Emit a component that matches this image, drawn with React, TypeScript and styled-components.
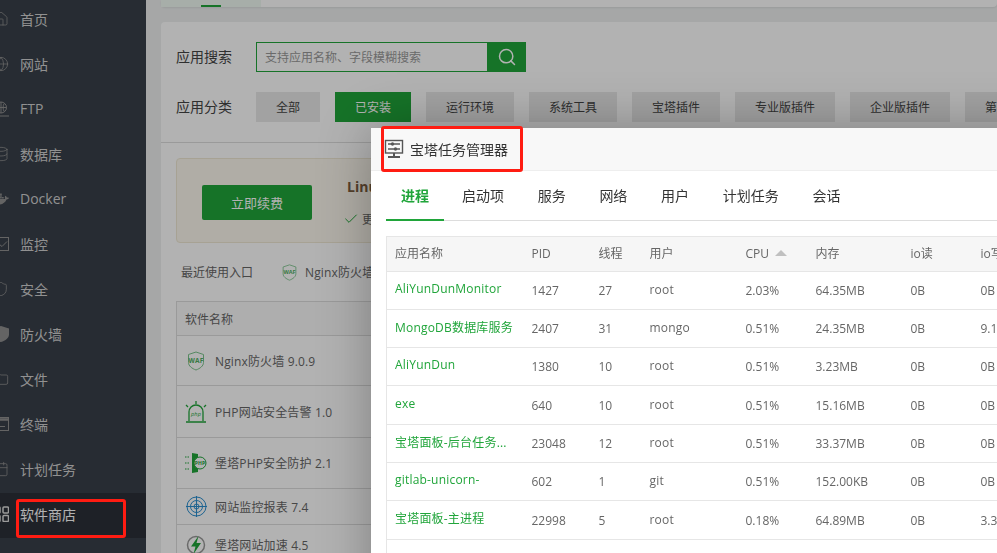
import * as React from 'react';
import styled, { createGlobalStyle } from 'styled-components';
import { Calendar, Database, Folder, Globe, Home, Search, Check, Shield } from 'lucide-react';
import { FaDocker } from 'react-icons/fa';

const font = `"Open Sans", "Noto Sans CJK SC", sans-serif`;

const GlobalStyle = createGlobalStyle`
  html, body {
    margin: 0;
    height: 100%;
    overflow: hidden;
    font-family: ${font};
  }
  * { box-sizing: border-box; }
`;

const FtpIcon = () => (
  <svg width="16" height="16" viewBox="0 0 16 16" fill="none" stroke="currentColor" strokeWidth="1">
    <circle cx="8" cy="6.5" r="5.5" />
    <path d="M2.5 6.5h11M8 1v11M4.8 2.5c1.5 2.5 1.5 5.5 0 8M11.2 2.5c-1.5 2.5-1.5 5.5 0 8M0 15h16" />
  </svg>
);

const MonitorIcon = () => (
  <svg width="16" height="16" viewBox="0 0 16 16" fill="none" stroke="currentColor" strokeWidth="1">
    <rect x="0.5" y="1.5" width="15" height="13" />
    <path d="M3 11l3-3 3 2.5 5-5" />
  </svg>
);

const HalfShieldIcon = () => (
  <svg width="16" height="16" viewBox="0 0 16 16" fill="currentColor">
    <path d="M1 2.5L8 0l8 2.5v6c0 3.500-3.500 6-8 7.500-4.500-1.500-7-4-7-7.500z" />
  </svg>
);

const TerminalIcon = () => (
  <svg width="16" height="16" viewBox="0 0 16 16" fill="none" stroke="currentColor" strokeWidth="1">
    <rect x="0.5" y="1.5" width="15" height="13" />
    <path d="M0.500 3.500h15" strokeWidth="2.500" />
    <path d="M7 10.500h5" />
  </svg>
);

const GridIcon = () => (
  <svg width="16" height="16" viewBox="0 0 16 16" fill="none" stroke="currentColor" strokeWidth="1.500">
    <rect x="1" y="1" width="6" height="6" rx="1" />
    <rect x="10" y="1" width="5.500" height="6" rx="1" />
    <rect x="1" y="9.500" width="6" height="6" rx="1" />
    <rect x="10" y="9.500" width="5.500" height="6" rx="1" />
  </svg>
);

const WafIcon = ({ size = 20 }: { size?: number }) => (
  <svg width={size} height={size} viewBox="0 0 20 20" fill="none">
    <path d="M10 1l7.500 2.500v8c0 3.500-3.500 6-7.500 7.500-4-1.500-7.500-4-7.500-7.500v-8z" stroke="#7cc48c" strokeWidth="1" />
    <text x="10" y="12" textAnchor="middle" fontSize="6.500" fontWeight="700" fill="#4fae62" fontFamily="Open Sans">WAF</text>
  </svg>
);

const AlarmIcon = () => (
  <svg width="22" height="24" viewBox="0 0 22 24" fill="none" stroke="#20a53a" strokeWidth="1.300">
    <path d="M4 21V12a7 7 0 0 1 14 0v9M1 22h20M11 1v3M1 5l2 2M21 5l-2 2" />
    <text x="11" y="16" textAnchor="middle" fontSize="5.500" fill="#20a53a" stroke="none" fontStyle="italic" fontFamily="Open Sans">php</text>
  </svg>
);

const GuardIcon = () => (
  <svg width="22" height="20" viewBox="0 0 22 20" fill="none">
    <path d="M0 4h5M0 10h5M0 16h5" stroke="#20a53a" strokeDasharray="1.500 1" />
    <path d="M7 0l6 1v18l-6 1z" fill="#20a53a" />
    <circle cx="15" cy="10" r="6" fill="#fff" stroke="#20a53a" />
    <text x="15" y="12" textAnchor="middle" fontSize="5" fontWeight="700" fill="#20a53a" fontFamily="Open Sans">PHP</text>
  </svg>
);

const RadarIcon = () => (
  <svg width="21" height="21" viewBox="0 0 21 21" fill="none" stroke="#2a8fd0" strokeWidth="1">
    <circle cx="10.500" cy="10.500" r="9.500" />
    <circle cx="10.500" cy="10.500" r="6" />
    <circle cx="10.500" cy="10.500" r="2.500" />
    <path d="M0 10.500h21M10.500 0v21" />
  </svg>
);

const BoltIcon = () => (
  <svg width="20" height="20" viewBox="0 0 20 20" fill="none">
    <circle cx="10" cy="10" r="8.500" stroke="#999" strokeWidth="1.500" />
    <path d="M12.500 1L5 11.500h4.500L7.500 19 15 8h-4.500z" fill="#20a53a" />
  </svg>
);

const TaskIcon = () => (
  <svg width="20" height="20" viewBox="0 0 20 20" fill="none" stroke="#555" strokeWidth="1.400">
    <rect x="1.500" y="1.500" width="17" height="12.500" />
    <path d="M10 14v3M4 18h12" strokeWidth="2" />
    <path d="M4 5h3M10 5h6M4 10h6M13 10h3" />
    <circle cx="8.500" cy="5" r="1" fill="#555" />
    <circle cx="11.500" cy="10" r="1" fill="#555" />
  </svg>
);

const navItems: { label: string; icon: React.ReactNode; active?: boolean }[] = [
  { label: '首页', icon: <Home size={16} strokeWidth={1.2} /> },
  { label: '网站', icon: <Globe size={16} strokeWidth={1.2} /> },
  { label: 'FTP', icon: <FtpIcon /> },
  { label: '数据库', icon: <Database size={16} strokeWidth={1.2} /> },
  { label: 'Docker', icon: <FaDocker size={16} /> },
  { label: '监控', icon: <MonitorIcon /> },
  { label: '安全', icon: <Shield size={16} strokeWidth={1.2} /> },
  { label: '防火墙', icon: <HalfShieldIcon /> },
  { label: '文件', icon: <Folder size={16} strokeWidth={1.2} /> },
  { label: '终端', icon: <TerminalIcon /> },
  { label: '计划任务', icon: <Calendar size={16} strokeWidth={1.2} /> },
  { label: '软件商店', icon: <GridIcon />, active: true },
];

const categories = ['全部', '已安装', '运行环境', '系统工具', '宝塔插件', '专业版插件', '企业版插件', '第三方插件'];

const software: { name: string; icon: React.ReactNode; height: number }[] = [
  { name: 'Nginx防火墙 9.0.9', icon: <WafIcon />, height: 50 },
  { name: 'PHP网站安全告警 1.0', icon: <AlarmIcon />, height: 52 },
  { name: '堡塔PHP安全防护 2.1', icon: <GuardIcon />, height: 51 },
  { name: '网站监控报表 7.4', icon: <RadarIcon />, height: 36 },
  { name: '堡塔网站加速 4.5', icon: <BoltIcon />, height: 40 },
];

const tabs = ['进程', '启动项', '服务', '网络', '用户', '计划任务', '会话'];

const columns = [
  { label: '应用名称', width: 137 },
  { label: 'PID', width: 67 },
  { label: '线程', width: 51 },
  { label: '用户', width: 96 },
  { label: 'CPU', width: 70, sorted: true },
  { label: '内存', width: 95 },
  { label: 'io读', width: 70 },
  { label: 'io写', width: 70 },
];

const processes = [
  { height: 38, cells: ['AliYunDunMonitor', '1427', '27', 'root', '2.03%', '64.35MB', '0B', '0B'] },
  { height: 38, cells: ['MongoDB数据库服务', '2407', '31', 'mongo', '0.51%', '24.35MB', '0B', '9.16KB'] },
  { height: 38, cells: ['AliYunDun', '1380', '10', 'root', '0.51%', '3.23MB', '0B', '0B'] },
  { height: 39, cells: ['exe', '640', '10', 'root', '0.51%', '15.16MB', '0B', '0B'] },
  { height: 38, cells: ['宝塔面板-后台任务...', '23048', '12', 'root', '0.51%', '33.37MB', '0B', '0B'] },
  { height: 38, cells: ['gitlab-unicorn-', '602', '1', 'git', '0.51%', '152.00KB', '0B', '0B'] },
  { height: 39, cells: ['宝塔面板-主进程', '22998', '5', 'root', '0.18%', '64.89MB', '0B', '3.31KB'] },
  { height: 38, cells: ['', '', '', '', '', '', '', ''] },
];

export default function App() {
  return (
    <Page>
      <GlobalStyle />
      <Sidebar>
        <NavList>
          {navItems.map((item) => (
            <NavItem key={item.label} $active={item.active}>
              <NavIcon $active={item.active}>{item.icon}</NavIcon>
              {item.label}
              {item.active && <SidebarMark />}
            </NavItem>
          ))}
        </NavList>
      </Sidebar>

      <Main>
        <TopCard>
          <TopTab />
        </TopCard>
        <StoreCard>
          <StoreHead>
            <FilterRow>
              <FilterLabel>应用搜索</FilterLabel>
              <SearchInput>支持应用名称、字段模糊搜索</SearchInput>
              <SearchButton>
                <Search size={20} strokeWidth={1.8} />
              </SearchButton>
            </FilterRow>
            <FilterRow>
              <FilterLabel>应用分类</FilterLabel>
              <CategoryList>
                {categories.map((c) => (
                  <Category key={c} $active={c === '已安装'}>{c}</Category>
                ))}
              </CategoryList>
            </FilterRow>
          </StoreHead>
          <StoreBody>
            <Banner>
              <RenewButton>立即续费</RenewButton>
              <BannerText>
                <BannerTitle>Linux企业版</BannerTitle>
                <BannerPerk>
                  <Check size={16} color="#20a53a" strokeWidth={1.5} />
                  更多专业功能
                </BannerPerk>
              </BannerText>
            </Banner>
            <RecentRow>
              <RecentLabel>最近使用入口</RecentLabel>
              <WafIcon size={17} />
              <RecentName>Nginx防火墙</RecentName>
            </RecentRow>
            <SoftTable>
              <SoftHead>软件名称</SoftHead>
              {software.map((s) => (
                <SoftRow key={s.name} $height={s.height}>
                  <SoftIcon>{s.icon}</SoftIcon>
                  {s.name}
                </SoftRow>
              ))}
            </SoftTable>
          </StoreBody>
        </StoreCard>
      </Main>

      <Scrim />

      <Modal>
        <ModalTitle>
          <TaskIcon />
          宝塔任务管理器
          <TitleMark />
        </ModalTitle>
        <ModalBody>
          <TabBar>
            {tabs.map((t) => (
              <Tab key={t} $active={t === '进程'}>{t}</Tab>
            ))}
          </TabBar>
          <ProcessTable>
            <colgroup>
              {columns.map((c) => (
                <col key={c.label} width={c.width} />
              ))}
            </colgroup>
            <thead>
              <tr>
                {columns.map((c) => (
                  <HeadCell key={c.label}>
                    {c.label}
                    {c.sorted && <SortArrow />}
                  </HeadCell>
                ))}
              </tr>
            </thead>
            <tbody>
              {processes.map((row, i) => (
                <ProcessRow key={i} $height={row.height}>
                  {row.cells.map((value, j) =>
                    j === 0 ? (
                      <NameCell key={j}>{value}</NameCell>
                    ) : j === 3 ? (
                      <UserCell key={j}>{value}</UserCell>
                    ) : (
                      <Cell key={j}>{value}</Cell>
                    ),
                  )}
                </ProcessRow>
              ))}
            </tbody>
          </ProcessTable>
        </ModalBody>
      </Modal>
    </Page>
  );
}

const Page = styled.div`
  display: flex;
  width: 997px;
  height: 553px;
  overflow: hidden;
  background: #eef0f0;
`;

const Sidebar = styled.aside`
  width: 146px;
  flex: none;
  background: #383f49;
  overflow: hidden;
`;

const NavList = styled.nav`
  margin-top: -2px;
`;

const NavItem = styled.div<{ $active?: boolean }>`
  position: relative;
  display: flex;
  align-items: center;
  height: 45px;
  padding-bottom: 4px;
  font-size: 14px;
  color: ${(p) => (p.$active ? '#fff' : '#d0d0d0')};
  background: ${(p) => (p.$active ? '#2c3038' : 'transparent')};
`;

const NavIcon = styled.span<{ $active?: boolean }>`
  display: flex;
  margin-left: -7px;
  margin-right: 11px;
  color: ${(p) => (p.$active ? '#ddd' : '#909090')};
`;

const SidebarMark = styled.div`
  position: absolute;
  left: 16px;
  top: 6px;
  width: 110px;
  height: 39px;
  border: 3px solid #ff1c12;
  border-radius: 3px;
  z-index: 30;
`;

const Main = styled.main`
  flex: 1;
  min-width: 0;
  padding-left: 15px;
  overflow: hidden;
`;

const TopCard = styled.div`
  height: 7px;
  margin-bottom: 15px;
  background: #fff;
  border-radius: 0 0 4px 4px;
  box-shadow: 0 1px 2px rgba(0, 0, 0, 0.08);
`;

const TopTab = styled.div`
  position: relative;
  width: 100px;
  height: 7px;
  background: #f0faf2;
  &::after {
    content: '';
    display: block;
    width: 20px;
    height: 2px;
    margin-left: 40px;
    position: absolute;
    bottom: 0;
    background: #20a53a;
  }
`;

const StoreCard = styled.section`
  width: 900px;
  height: 560px;
  background: #fff;
  border-radius: 4px;
`;

const StoreHead = styled.div`
  display: flex;
  flex-direction: column;
  gap: 20px;
  height: 121px;
  padding: 20px 15px 0;
  border-bottom: 1px solid #ddd;
`;

const FilterRow = styled.div`
  display: flex;
  align-items: center;
  height: 30px;
`;

const FilterLabel = styled.div`
  width: 80px;
  flex: none;
  padding-bottom: 2px;
  font-size: 14px;
  color: #444;
`;

const SearchInput = styled.div`
  display: flex;
  align-items: center;
  width: 231px;
  height: 30px;
  padding-left: 8px;
  border: 1px solid #20a53a;
  border-right: none;
  font-size: 12px;
  color: #999;
`;

const SearchButton = styled.div`
  display: flex;
  align-items: center;
  justify-content: center;
  width: 39px;
  height: 30px;
  background: #20a53a;
  color: #fff;
`;

const CategoryList = styled.div`
  display: flex;
  gap: 15px;
`;

const Category = styled.div<{ $active?: boolean }>`
  display: flex;
  align-items: center;
  flex: none;
  height: 30px;
  padding: 0 20px;
  font-size: 12px;
  background: ${(p) => (p.$active ? '#20a53a' : '#e8e8e8')};
  color: ${(p) => (p.$active ? '#fff' : '#444')};
`;

const StoreBody = styled.div`
  padding: 15px;
`;

const Banner = styled.div`
  display: flex;
  align-items: center;
  gap: 35px;
  height: 85px;
  padding: 3px 0 0 25px;
  background: #fcf8ee;
  border: 1px solid #efe8d4;
  border-radius: 4px;
`;

const RenewButton = styled.div`
  display: flex;
  align-items: center;
  justify-content: center;
  width: 110px;
  height: 35px;
  background: #20a53a;
  border-radius: 2px;
  color: #fff;
  font-size: 13px;
`;

const BannerText = styled.div`
  display: flex;
  flex-direction: column;
  gap: 14px;
  margin-left: -4px;
`;

const BannerTitle = styled.div`
  margin-left: 4px;
  font-size: 14px;
  font-weight: 700;
  color: #7a5c3e;
`;

const BannerPerk = styled.div`
  display: flex;
  align-items: center;
  gap: 3px;
  font-size: 12px;
  color: #666;
`;

const RecentRow = styled.div`
  display: flex;
  align-items: center;
  height: 30px;
  margin: 14px 0;
  padding-left: 5px;
`;

const RecentLabel = styled.div`
  width: 100px;
  font-size: 12px;
  color: #666;
`;

const RecentName = styled.div`
  margin-left: 7px;
  font-size: 12px;
  letter-spacing: 0.15px;
  color: #666;
`;

const SoftTable = styled.div`
  border: 1px solid #ddd;
  border-bottom: none;
`;

const SoftHead = styled.div`
  display: flex;
  align-items: center;
  height: 34px;
  padding-left: 8px;
  font-size: 12px;
  color: #666;
  background: #fafafa;
  border-bottom: 1px solid #ddd;
`;

const SoftRow = styled.div<{ $height: number }>`
  display: flex;
  align-items: center;
  height: ${(p) => p.$height}px;
  font-size: 12px;
  letter-spacing: 0.15px;
  color: #666;
  border-bottom: 1px solid #ddd;
`;

const SoftIcon = styled.span`
  display: flex;
  justify-content: center;
  width: 38px;
`;

const Scrim = styled.div`
  position: fixed;
  inset: 0;
  background: rgba(0, 0, 0, 0.3);
  z-index: 10;
`;

const Modal = styled.div`
  position: absolute;
  left: 371px;
  top: 128px;
  width: 800px;
  height: 600px;
  background: #fff;
  box-shadow: 1px 1px 50px rgba(0, 0, 0, 0.3);
  z-index: 20;
`;

const ModalTitle = styled.div`
  position: relative;
  display: flex;
  align-items: center;
  gap: 6px;
  height: 43px;
  padding-left: 13px;
  font-size: 14px;
  color: #333;
  background: #f8f8f8;
  border-bottom: 1px solid #eee;
`;

const TitleMark = styled.div`
  position: absolute;
  left: 10px;
  top: -2px;
  width: 142px;
  height: 46px;
  border: 3px solid #ff1c12;
  border-radius: 3px;
`;

const ModalBody = styled.div`
  padding: 10px 15px 0;
`;

const TabBar = styled.div`
  display: flex;
  gap: 3.7px;
  height: 40px;
  border-bottom: 1px solid #ddd;
`;

const Tab = styled.div<{ $active?: boolean }>`
  height: 40px;
  margin-right: ${(p) => (p.$active ? '-0.7px' : '0')};
  padding: 0 15px;
  line-height: 30px;
  font-size: 14px;
  font-weight: ${(p) => (p.$active ? 700 : 400)};
  color: ${(p) => (p.$active ? '#20a53a' : '#333')};
  border-bottom: ${(p) => (p.$active ? '2px solid #20a53a' : 'none')};
`;

const ProcessTable = styled.table`
  table-layout: fixed;
  width: 656px;
  margin-top: 15px;
  border-collapse: collapse;
  border: 1px solid #e6e6e6;
  font-size: 12px;
`;

const HeadCell = styled.th`
  height: 35px;
  padding: 0 8px 2px;
  font-weight: 400;
  text-align: left;
  white-space: nowrap;
  color: #666;
  background: #f6f6f6;
  border-bottom: 1px solid #e6e6e6;
`;

const SortArrow = styled.span`
  display: inline-block;
  margin-left: 6px;
  vertical-align: 2px;
  border-left: 6px solid transparent;
  border-right: 6px solid transparent;
  border-bottom: 6px solid #c0c0c0;
`;

const ProcessRow = styled.tr<{ $height: number }>`
  height: ${(p) => p.$height}px;
  border-bottom: 1px solid #e6e6e6;
`;

const Cell = styled.td`
  padding: 0 8px;
  white-space: nowrap;
  overflow: hidden;
  color: #666;
`;

const NameCell = styled(Cell)`
  padding-bottom: 4px;
  letter-spacing: 0.2px;
  color: #20a53a;
`;

const UserCell = styled(Cell)`
  padding-bottom: 2px;
  letter-spacing: 0.2px;
`;
